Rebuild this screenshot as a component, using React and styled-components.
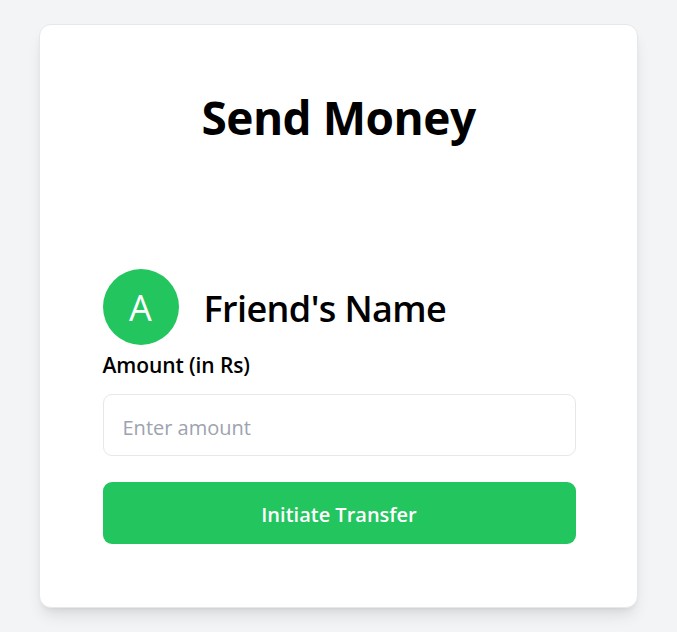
import React, { useState } from 'react';
import styled, { createGlobalStyle } from 'styled-components';

const GlobalStyle = createGlobalStyle`
  * { box-sizing: border-box; }
  body {
    margin: 0;
    background: #f3f4f6;
    font-family: 'Open Sans', 'Noto Sans', sans-serif;
  }
`;

const Page = styled.div`
  display: flex;
  justify-content: center;
  align-items: center;
  height: 100vh;
  background: #f3f4f6;
`;

const Card = styled.div`
  width: 599px;
  padding: 25px;
  background: #fff;
  border: 1px solid #e5e7eb;
  border-radius: 12px;
  box-shadow: 0 10px 15px -3px rgba(0, 0, 0, 0.1), 0 4px 6px -4px rgba(0, 0, 0, 0.1);
  display: flex;
  flex-direction: column;
  gap: 50.5px;
`;

const Header = styled.div`
  padding: 37.5px;
`;

const Title = styled.h2`
  margin: 0;
  padding-top: 2px;
  text-align: center;
  font-size: 46px;
  line-height: 54px;
  font-weight: 700;
  color: #000;
  letter-spacing: -0.5px;
`;

const Body = styled.div`
  padding: 37.5px 36.5px 37.5px 37.5px;
`;

const Friend = styled.div`
  display: flex;
  align-items: center;
  gap: 25px;
`;

const Avatar = styled.div`
  width: 76px;
  height: 76px;
  border-radius: 50%;
  background: #22c55e;
  display: flex;
  align-items: center;
  justify-content: center;
  color: #fff;
  font-size: 36px;
  font-weight: 400;
`;

const FriendName = styled.h3`
  margin: 0;
  padding-top: 4px;
  font-size: 36px;
  line-height: 48px;
  font-weight: 600;
  color: #000;
  letter-spacing: -0.6px;
`;

const Form = styled.div`
  display: flex;
  flex-direction: column;
  gap: 26px;
`;

const Field = styled.div`
  display: flex;
  flex-direction: column;
  gap: 12px;
`;

const Label = styled.label`
  font-size: 21px;
  line-height: 34px;
  padding-top: 3px;
  font-weight: 600;
  color: #000;
  letter-spacing: -0.1px;
`;

const Input = styled.input`
  height: 62px;
  width: 100%;
  border: 1px solid #e5e7eb;
  border-radius: 9px;
  padding: 4px 19px 0;
  font-family: inherit;
  font-size: 20px;
  color: #111;
  outline: none;
  &::placeholder { color: #9ca3af; }
`;

const Button = styled.button`
  height: 62px;
  width: 100%;
  padding: 2px 0 0;
  border: none;
  border-radius: 9px;
  background: #22c55e;
  color: #fff;
  font-family: inherit;
  font-size: 20px;
  font-weight: 600;
  cursor: pointer;
`;

export default function App() {
  const [amount, setAmount] = useState('');
  return (
    <Page>
      <GlobalStyle />
      <Card>
        <Header>
          <Title>Send Money</Title>
        </Header>
        <Body>
          <Friend>
            <Avatar>A</Avatar>
            <FriendName>Friend's Name</FriendName>
          </Friend>
          <Form>
            <Field>
              <Label htmlFor="amount">Amount (in Rs)</Label>
              <Input
                id="amount"
                type="number"
                placeholder="Enter amount"
                value={amount}
                onChange={e => setAmount(e.target.value)}
              />
            </Field>
            <Button>Initiate Transfer</Button>
          </Form>
        </Body>
      </Card>
    </Page>
  );
}
